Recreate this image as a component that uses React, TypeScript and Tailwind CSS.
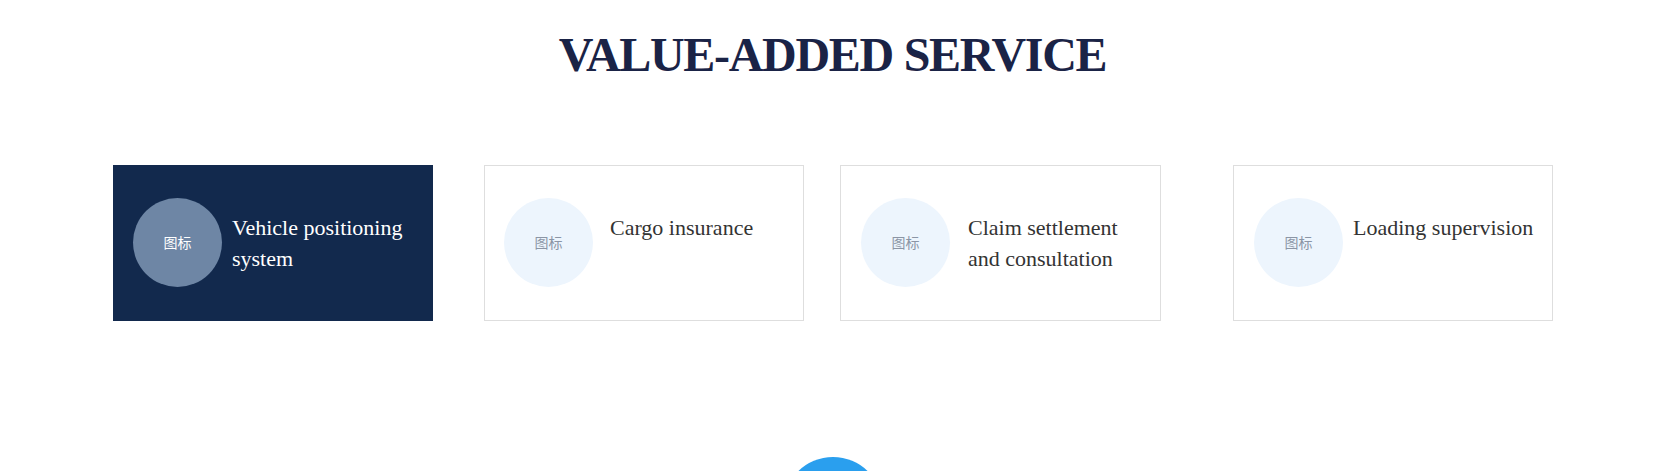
import React from 'react';

type Service = {
  title: string;
  width: string;
  margin: string;
  pad: string;
  gap: string;
  textWidth: string;
  active?: boolean;
};

const services: Service[] = [
  { title: 'Vehicle positioning system', width: 'w-[320px]', margin: 'ml-[113px]', pad: 'pl-[19px]', gap: 'ml-[10px]', textWidth: 'max-w-[190px]', active: true },
  { title: 'Cargo insurance', width: 'w-[320px]', margin: 'ml-[51px]', pad: 'pl-[19px]', gap: 'ml-[17px]', textWidth: 'max-w-[180px]' },
  { title: 'Claim settlement and consultation', width: 'w-[321px]', margin: 'ml-[36px]', pad: 'pl-[20px]', gap: 'ml-[18px]', textWidth: 'max-w-[170px]' },
  { title: 'Loading supervision', width: 'w-[320px]', margin: 'ml-[72px]', pad: 'pl-[20px]', gap: 'ml-[10px]', textWidth: 'max-w-[195px]' },
];

const ServiceCard = ({ s }: { s: Service }) => (
  <div
    className={`${s.width} ${s.margin} ${s.pad} h-[156px] shrink-0 flex items-start pt-[32px] ${
      s.active ? 'bg-[#12294d] border border-[#12294d]' : 'bg-white border border-[#dedede]'
    }`}
  >
    <div
      className={`w-[89px] h-[89px] rounded-full shrink-0 flex items-center justify-center text-[14px] ${
        s.active ? 'bg-[#6e86a5] text-white' : 'bg-[#edf5fd] text-[#8b95a5]'
      }`}
      style={{ fontFamily: '"Noto Sans CJK SC", "Noto Sans", sans-serif' }}
    >
      图标
    </div>
    <div
      className={`${s.gap} ${s.textWidth} mt-[14px] text-[22px] leading-[31px] ${
        s.active ? 'text-white' : 'text-[#333333]'
      }`}
    >
      {s.title}
    </div>
  </div>
);

export default function App() {
  return (
    <div className="w-full bg-white" style={{ fontFamily: '"Liberation Serif", "Times New Roman", serif' }}>
      <h2 className="pt-[31px] pr-[10px] text-center text-[48px] leading-[48px] font-bold tracking-[-1.3px] text-[#1a2346]">
        VALUE-ADDED SERVICE
      </h2>

      <div className="flex mt-[86px]">
        {services.map(s => (
          <ServiceCard key={s.title} s={s} />
        ))}
      </div>

      <div className="flex justify-center pr-[9px] mt-[136px]">
        <div className="w-[100px] h-[100px] rounded-full bg-[#2a9fee]"></div>
      </div>
    </div>
  );
}
